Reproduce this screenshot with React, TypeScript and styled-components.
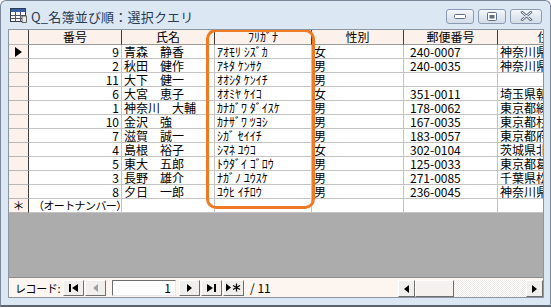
import styled, { createGlobalStyle } from "styled-components";

type Person = {
  id: string;
  name: string;
  kana: string;
  sex: string;
  zip: string;
  addr: string;
};

const people: Person[] = [
  { id: "9", name: "青森　静香", kana: "ｱｵﾓﾘ ｼｽﾞｶ", sex: "女", zip: "240-0007", addr: "神奈川県" },
  { id: "2", name: "秋田　健作", kana: "ｱｷﾀ ｹﾝｻｸ", sex: "男", zip: "240-0035", addr: "神奈川県" },
  { id: "11", name: "大下　健一", kana: "ｵｵｼﾀ ｹﾝｲﾁ", sex: "男", zip: "", addr: "" },
  { id: "6", name: "大宮　恵子", kana: "ｵｵﾐﾔ ｹｲｺ", sex: "女", zip: "351-0011", addr: "埼玉県朝" },
  { id: "1", name: "神奈川　大輔", kana: "ｶﾅｶﾞﾜ ﾀﾞｲｽｹ", sex: "男", zip: "178-0062", addr: "東京都練" },
  { id: "10", name: "金沢　強", kana: "ｶﾅｻﾞﾜ ﾂﾖｼ", sex: "男", zip: "167-0035", addr: "東京都杉" },
  { id: "7", name: "滋賀　誠一", kana: "ｼｶﾞ ｾｲｲﾁ", sex: "男", zip: "183-0057", addr: "東京都府" },
  { id: "4", name: "島根　裕子", kana: "ｼﾏﾈ ﾕｳｺ", sex: "女", zip: "302-0104", addr: "茨城県北" },
  { id: "5", name: "東大　五郎", kana: "ﾄｳﾀﾞｲ ｺﾞﾛｳ", sex: "男", zip: "125-0033", addr: "東京都葛" },
  { id: "3", name: "長野　雄介", kana: "ﾅｶﾞﾉ ﾕｳｽｹ", sex: "男", zip: "271-0085", addr: "千葉県松" },
  { id: "8", name: "夕日　一郎", kana: "ﾕｳﾋ ｲﾁﾛｳ", sex: "男", zip: "236-0045", addr: "神奈川県" },
];

const headers = ["番号", "氏名", "ﾌﾘｶﾞﾅ", "性別", "郵便番号", "住所"];

const GlobalStyle = createGlobalStyle`
  html, body {
    margin: 0;
    padding: 0;
    background: #ffffff;
  }
  body {
    font-family: "Noto Sans CJK JP", "DejaVu Sans", sans-serif;
  }
`;

const Window = styled.div`
  width: 551px;
  height: 307px;
  box-sizing: border-box;
  border: 1px solid #7b8798;
  border-bottom: 2px solid #5c6470;
  border-radius: 6px 6px 0 0;
  background: #dce7f4;
  display: flex;
  flex-direction: column;
  overflow: hidden;
`;

const TitleBar = styled.div`
  height: 28px;
  flex-shrink: 0;
  display: flex;
  align-items: center;
  padding: 0 8px 0 9px;
  gap: 4px;
`;

const Title = styled.div`
  flex: 1;
  font-size: 13px;
  color: #2a3a50;
  letter-spacing: 0.2px;
  padding-top: 2px;
`;

const Caption = styled.div`
  display: flex;
  gap: 4px;
  padding-top: 2px;
`;

const CapButton = styled.div<{ $wide?: boolean }>`
  width: ${(p) => (p.$wide ? "32px" : "28px")};
  height: 15px;
  box-sizing: border-box;
  border: 1px solid #8a9ab1;
  border-radius: 3px;
  background: linear-gradient(#f6f9fc, #dfe6ef 55%, #d4dde9);
  display: flex;
  align-items: center;
  justify-content: center;
`;

const Client = styled.div`
  flex: 1;
  margin: 0 6px 7px 7px;
  border: 1px solid #8c96a3;
  display: flex;
  flex-direction: column;
  min-height: 0;
`;

const Sheet = styled.div`
  flex: 1;
  background: #acacac;
  position: relative;
  overflow: hidden;
`;

const Grid = styled.div`
  display: grid;
  grid-template-columns: 20px 93px 93px 97px 92px 94px 104px;
  grid-auto-rows: 14px;
  grid-template-rows: 15px;
  background: #ffffff;
  width: max-content;
  font-size: 12px;
  line-height: 13px;
  color: #000;
`;

const Cell = styled.div<{ $align?: "left" | "right"; $pad?: number }>`
  box-sizing: border-box;
  border-right: 1px solid #c4c4c4;
  border-bottom: 1px solid #c4c4c4;
  padding: 0 2px 0 ${(p) => p.$pad ?? 2}px;
  white-space: nowrap;
  text-align: ${(p) => p.$align ?? "left"};
`;

const AutoNumber = styled(Cell)`
  font-size: 11px;
  letter-spacing: -0.6px;
  padding-left: 4px;
`;

const HeadCell = styled.div`
  box-sizing: border-box;
  background: #fdf2eb;
  border-right: 1px solid #3c3c3c;
  border-bottom: 1px solid #9a9a9a;
  text-align: center;
  white-space: nowrap;
  line-height: 14px;
`;

const Selector = styled.div`
  box-sizing: border-box;
  background: #fdf2eb;
  border-right: 1px solid #3c3c3c;
  border-bottom: 1px solid #b8b8b8;
  display: flex;
  align-items: center;
  justify-content: center;
  font-size: 12px;
`;

const Highlight = styled.div`
  position: absolute;
  left: 197px;
  top: -1px;
  width: 109px;
  height: 180px;
  box-sizing: border-box;
  border: 3px solid #f07a21;
  border-radius: 10px;
  pointer-events: none;
`;

const NavBar = styled.div`
  height: 19px;
  flex-shrink: 0;
  background: #fdf5ef;
  border-top: 1px solid #8c8c8c;
  display: flex;
  align-items: center;
  padding-left: 6px;
  font-size: 12px;
`;

const NavLabel = styled.span`
  width: 48px;
  flex-shrink: 0;
  white-space: nowrap;
  font-size: 11px;
  letter-spacing: -0.4px;
`;

const NavButton = styled.div<{ $disabled?: boolean }>`
  width: 21px;
  height: 16px;
  box-sizing: border-box;
  background: #f1efee;
  border: 1px solid;
  border-color: #ffffff #6e6e6e #6e6e6e #ffffff;
  display: flex;
  align-items: center;
  justify-content: center;
  margin-right: 1px;
  flex-shrink: 0;
  color: ${(p) => (p.$disabled ? "#a0a0a0" : "#000")};
`;

const RecordBox = styled.div`
  width: 64px;
  height: 16px;
  box-sizing: border-box;
  background: #ffffff;
  border: 1px solid;
  border-color: #6e6e6e #e8e8e8 #e8e8e8 #6e6e6e;
  margin: 0 3px 0 5px;
  text-align: right;
  padding-right: 4px;
  line-height: 14px;
  flex-shrink: 0;
`;

const Total = styled.span`
  margin-left: 5px;
  flex: 1;
  white-space: nowrap;
`;

const HScroll = styled.div`
  width: 145px;
  height: 17px;
  display: flex;
  align-self: flex-end;
  flex-shrink: 0;
`;

const ScrollArrow = styled.div`
  width: 17px;
  height: 17px;
  box-sizing: border-box;
  background: #f1efee;
  border: 1px solid;
  border-color: #ffffff #6e6e6e #6e6e6e #ffffff;
  display: flex;
  align-items: center;
  justify-content: center;
`;

const Thumb = styled.div`
  width: 39px;
  box-sizing: border-box;
  background: #f5f1ee;
  border: 1px solid;
  border-color: #ffffff #6e6e6e #6e6e6e #ffffff;
`;

const Track = styled.div`
  flex: 1;
  background: repeating-conic-gradient(#ffffff 0 25%, #ebe8e5 0 50%) 0 0 / 2px 2px;
`;

const Tri = ({ dir, color = "#000" }: { dir: "l" | "r"; color?: string }) => (
  <svg width="5" height="8" viewBox="0 0 5 8">
    <path d={dir === "r" ? "M0 0 L5 4 L0 8 Z" : "M5 0 L0 4 L5 8 Z"} fill={color} />
  </svg>
);

const SheetIcon = () => (
  <svg width="17" height="15" viewBox="0 0 17 15">
    <rect x="0.5" y="0.5" width="15" height="13" fill="#ffffff" stroke="#2d3b55" />
    <rect x="1" y="1" width="14" height="3" fill="#3b5ea8" />
    <path d="M1 7.5 H15 M1 10.5 H15 M5.5 4 V13.5 M10.5 4 V13.5" stroke="#556" strokeWidth="1" />
    <rect x="12" y="8" width="4.5" height="6.5" fill="#e8e8e8" stroke="#444" strokeWidth="0.8" />
  </svg>
);

const Row = ({ person, current }: { person: Person; current: boolean }) => (
  <>
    <Selector>
      {current && (
        <svg width="7" height="10" viewBox="0 0 7 10">
          <path d="M0 0 L7 5 L0 10 Z" fill="#000" />
        </svg>
      )}
    </Selector>
    <Cell $align="right">{person.id}</Cell>
    <Cell>{person.name}</Cell>
    <Cell>{person.kana}</Cell>
    <Cell>{person.sex}</Cell>
    <Cell $pad={6}>{person.zip}</Cell>
    <Cell>{person.addr}</Cell>
  </>
);

export default function App() {
  return (
    <>
      <GlobalStyle />
      <Window>
        <TitleBar>
          <SheetIcon />
          <Title>Q_名簿並び順：選択クエリ</Title>
          <Caption>
            <CapButton>
              <svg width="12" height="6" viewBox="0 0 12 6">
                <rect x="0.5" y="1.5" width="11" height="4" rx="1" fill="#ffffff" stroke="#5f6f86" />
              </svg>
            </CapButton>
            <CapButton>
              <svg width="10" height="9" viewBox="0 0 10 9">
                <rect x="0.5" y="0.5" width="9" height="8" rx="1" fill="#ffffff" stroke="#5f6f86" />
                <rect x="2.5" y="3" width="5" height="3.5" fill="#5f6f86" />
              </svg>
            </CapButton>
            <CapButton $wide>
              <svg width="13" height="10" viewBox="0 0 13 10">
                <path d="M2 1 L11 9 M11 1 L2 9" stroke="#5f6f86" strokeWidth="2.6" strokeLinecap="round" />
                <path d="M2 1 L11 9 M11 1 L2 9" stroke="#ffffff" strokeWidth="1" strokeLinecap="round" />
              </svg>
            </CapButton>
          </Caption>
        </TitleBar>
        <Client>
          <Sheet>
            <Grid>
              <Selector />
              {headers.map((h) => (
                <HeadCell key={h}>{h}</HeadCell>
              ))}
              {people.map((p, i) => (
                <Row key={p.id} person={p} current={i === 0} />
              ))}
              <Selector>＊</Selector>
              <AutoNumber>（オートナンバー）</AutoNumber>
              <Cell />
              <Cell />
              <Cell />
              <Cell />
              <Cell />
            </Grid>
            <Highlight />
          </Sheet>
          <NavBar>
            <NavLabel>レコード:</NavLabel>
            <NavButton>
              <svg width="9" height="8" viewBox="0 0 9 8">
                <rect x="0" y="0" width="2" height="8" fill="#000" />
                <path d="M9 0 L3 4 L9 8 Z" fill="#000" />
              </svg>
            </NavButton>
            <NavButton $disabled>
              <Tri dir="l" color="#a0a0a0" />
            </NavButton>
            <RecordBox>1</RecordBox>
            <NavButton>
              <Tri dir="r" />
            </NavButton>
            <NavButton>
              <svg width="9" height="8" viewBox="0 0 9 8">
                <path d="M0 0 L6 4 L0 8 Z" fill="#000" />
                <rect x="7" y="0" width="2" height="8" fill="#000" />
              </svg>
            </NavButton>
            <NavButton>
              <svg width="15" height="9" viewBox="0 0 15 9">
                <path d="M0 0.5 L5 4.5 L0 8.5 Z" fill="#000" />
                <path d="M10.5 0.5 V8.5 M7 2.5 L14 6.5 M14 2.5 L7 6.5" stroke="#000" strokeWidth="1.2" />
              </svg>
            </NavButton>
            <Total>/ 11</Total>
            <HScroll>
              <ScrollArrow>
                <Tri dir="l" />
              </ScrollArrow>
              <Thumb />
              <Track />
              <ScrollArrow>
                <Tri dir="r" />
              </ScrollArrow>
            </HScroll>
          </NavBar>
        </Client>
      </Window>
    </>
  );
}
